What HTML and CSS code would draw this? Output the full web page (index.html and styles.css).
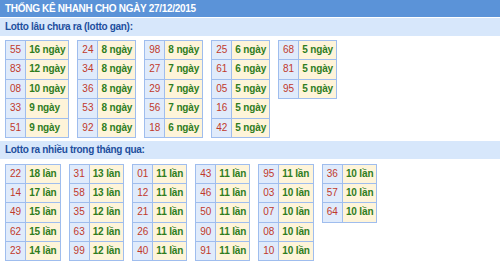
FILE: index.html
```html
<!DOCTYPE html>
<html lang="vi">
<head>
<meta charset="utf-8">
<link rel="stylesheet" href="styles.css">
</head>
<body>
<div class="title">THỐNG KÊ NHANH CHO NGÀY 27/12/2015</div>
<div class="sub">Lotto lâu chưa ra (lotto gan):</div>
<div class="group gan">
  <table><tr><td class="n">55</td><td class="v">16 ngày</td></tr><tr><td class="n">83</td><td class="v">12 ngày</td></tr><tr><td class="n">08</td><td class="v">10 ngày</td></tr><tr><td class="n">33</td><td class="v">9 ngày</td></tr><tr><td class="n">51</td><td class="v">9 ngày</td></tr></table>
  <table><tr><td class="n">24</td><td class="v">8 ngày</td></tr><tr><td class="n">34</td><td class="v">8 ngày</td></tr><tr><td class="n">36</td><td class="v">8 ngày</td></tr><tr><td class="n">53</td><td class="v">8 ngày</td></tr><tr><td class="n">92</td><td class="v">8 ngày</td></tr></table>
  <table><tr><td class="n">98</td><td class="v">8 ngày</td></tr><tr><td class="n">27</td><td class="v">7 ngày</td></tr><tr><td class="n">29</td><td class="v">7 ngày</td></tr><tr><td class="n">56</td><td class="v">7 ngày</td></tr><tr><td class="n">18</td><td class="v">6 ngày</td></tr></table>
  <table><tr><td class="n">25</td><td class="v">6 ngày</td></tr><tr><td class="n">61</td><td class="v">6 ngày</td></tr><tr><td class="n">05</td><td class="v">5 ngày</td></tr><tr><td class="n">16</td><td class="v">5 ngày</td></tr><tr><td class="n">42</td><td class="v">5 ngày</td></tr></table>
  <table><tr><td class="n">68</td><td class="v">5 ngày</td></tr><tr><td class="n">81</td><td class="v">5 ngày</td></tr><tr><td class="n">95</td><td class="v">5 ngày</td></tr></table>
</div>
<div class="sub">Lotto ra nhiều trong tháng qua:</div>
<div class="group nhieu">
  <table><tr><td class="n">22</td><td class="v">18 lần</td></tr><tr><td class="n">14</td><td class="v">17 lần</td></tr><tr><td class="n">49</td><td class="v">15 lần</td></tr><tr><td class="n">62</td><td class="v">15 lần</td></tr><tr><td class="n">23</td><td class="v">14 lần</td></tr></table>
  <table><tr><td class="n">31</td><td class="v">13 lần</td></tr><tr><td class="n">58</td><td class="v">13 lần</td></tr><tr><td class="n">35</td><td class="v">12 lần</td></tr><tr><td class="n">63</td><td class="v">12 lần</td></tr><tr><td class="n">99</td><td class="v">12 lần</td></tr></table>
  <table><tr><td class="n">01</td><td class="v">11 lần</td></tr><tr><td class="n">12</td><td class="v">11 lần</td></tr><tr><td class="n">21</td><td class="v">11 lần</td></tr><tr><td class="n">26</td><td class="v">11 lần</td></tr><tr><td class="n">40</td><td class="v">11 lần</td></tr></table>
  <table><tr><td class="n">43</td><td class="v">11 lần</td></tr><tr><td class="n">46</td><td class="v">11 lần</td></tr><tr><td class="n">50</td><td class="v">11 lần</td></tr><tr><td class="n">90</td><td class="v">11 lần</td></tr><tr><td class="n">91</td><td class="v">11 lần</td></tr></table>
  <table><tr><td class="n">95</td><td class="v">11 lần</td></tr><tr><td class="n">03</td><td class="v">10 lần</td></tr><tr><td class="n">07</td><td class="v">10 lần</td></tr><tr><td class="n">08</td><td class="v">10 lần</td></tr><tr><td class="n">10</td><td class="v">10 lần</td></tr></table>
  <table><tr><td class="n">36</td><td class="v">10 lần</td></tr><tr><td class="n">57</td><td class="v">10 lần</td></tr><tr><td class="n">64</td><td class="v">10 lần</td></tr></table>
</div>
</body>
</html>
```
FILE: styles.css
```css
html, body {
  margin: 0;
  padding: 0;
  background: #ffffff;
  font-family: "Liberation Sans", Arial, sans-serif;
  font-size: 10px;
}
.title {
  height: 17px;
  line-height: 17px;
  background: #5b93d8;
  color: #ffffff;
  font-size: 10px;
  font-weight: bold;
  letter-spacing: -0.3px;
  padding-left: 5px;
  border-bottom: 1px solid #ffffff;
}
.sub {
  height: 18px;
  line-height: 18px;
  background: #d7e7fb;
  color: #1e4f9e;
  font-size: 10px;
  font-weight: bold;
  letter-spacing: -0.3px;
  padding-left: 5px;
}
.group {
  display: flex;
  align-items: flex-start;
  gap: 8px;
  padding-left: 5px;
}
.gan {
  margin-top: 4px;
  margin-bottom: 3px;
}
.nhieu {
  margin-top: 5px;
}
table {
  border-collapse: collapse;
  border: 1px solid #9fbdee;
}
td {
  border: 1px solid #9fbdee;
  padding: 0 4px;
  white-space: nowrap;
}
.gan td {
  height: 18.4px;
  line-height: 18.4px;
}
.nhieu td {
  height: 18.2px;
  line-height: 18.2px;
}
td.n {
  background: #e0ebfb;
  color: #c0392b;
  text-align: center;
}
td.v {
  background: #fef4d9;
  color: #2f7d1e;
  font-weight: bold;
  padding: 0 3px;
  letter-spacing: -0.15px;
}
```
